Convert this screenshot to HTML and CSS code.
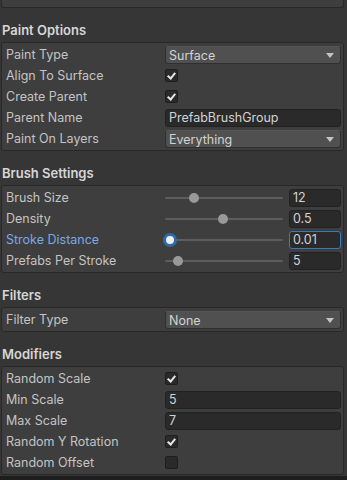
FILE: index.html
```html
<!DOCTYPE html>
<html lang="en">
<head>
    <meta charset="UTF-8">
    <meta name="viewport" content="width=device-width, initial-scale=1.0">
    <title>Prefab Brush</title>
    <link rel="stylesheet" href="styles.css">
</head>
<body>
<div class="inspector">
    <div class="panel panel-cut"></div>

    <h2 class="section-title">Paint Options</h2>
    <div class="panel">
        <div class="row">
            <span class="label">Paint Type</span>
            <div class="dropdown">Surface<span class="arrow"></span></div>
        </div>
        <div class="row">
            <span class="label">Align To Surface</span>
            <div><span class="checkbox checked"></span></div>
        </div>
        <div class="row">
            <span class="label">Create Parent</span>
            <div><span class="checkbox checked"></span></div>
        </div>
        <div class="row">
            <span class="label">Parent Name</span>
            <div class="field">PrefabBrushGroup</div>
        </div>
        <div class="row">
            <span class="label">Paint On Layers</span>
            <div class="dropdown">Everything<span class="arrow"></span></div>
        </div>
    </div>

    <h2 class="section-title">Brush Settings</h2>
    <div class="panel">
        <div class="row">
            <span class="label">Brush Size</span>
            <div class="slider-group">
                <div class="slider"><span class="thumb" style="left: 24.6%"></span></div>
                <div class="field">12</div>
            </div>
        </div>
        <div class="row">
            <span class="label">Density</span>
            <div class="slider-group">
                <div class="slider"><span class="thumb" style="left: 49%"></span></div>
                <div class="field">0.5</div>
            </div>
        </div>
        <div class="row focused">
            <span class="label">Stroke Distance</span>
            <div class="slider-group">
                <div class="slider"><span class="thumb" style="left: 4.2%"></span></div>
                <div class="field">0.01</div>
            </div>
        </div>
        <div class="row">
            <span class="label">Prefabs Per Stroke</span>
            <div class="slider-group">
                <div class="slider"><span class="thumb" style="left: 11%"></span></div>
                <div class="field">5</div>
            </div>
        </div>
    </div>

    <h2 class="section-title">Filters</h2>
    <div class="panel">
        <div class="row">
            <span class="label">Filter Type</span>
            <div class="dropdown">None<span class="arrow"></span></div>
        </div>
    </div>

    <h2 class="section-title">Modifiers</h2>
    <div class="panel">
        <div class="row">
            <span class="label">Random Scale</span>
            <div><span class="checkbox checked"></span></div>
        </div>
        <div class="row">
            <span class="label">Min Scale</span>
            <div class="field">5</div>
        </div>
        <div class="row">
            <span class="label">Max Scale</span>
            <div class="field">7</div>
        </div>
        <div class="row">
            <span class="label">Random Y Rotation</span>
            <div><span class="checkbox checked"></span></div>
        </div>
        <div class="row">
            <span class="label">Random Offset</span>
            <div><span class="checkbox"></span></div>
        </div>
    </div>
</div>
<div class="footer"></div>
</body>
</html>
```

FILE: styles.css
```css
* {
    margin: 0;
    padding: 0;
    box-sizing: border-box;
}
body {
    background-color: #363636;
    font-family: Inter, "Noto Sans", sans-serif;
    font-size: 12.5px;
    color: #c4c4c4;
    width: 347px;
    height: 480px;
    overflow: hidden;
}
.inspector {
    padding: 0 3px 0 1px;
}
.panel {
    background-color: #3e3e3e;
    border: 1px solid #282828;
    border-radius: 3px;
    padding: 1px 2px 1px 2px;
}
.panel-cut {
    height: 8px;
    border-top: none;
    border-radius: 0 0 3px 3px;
}
.section-title {
    font-size: 13px;
    font-weight: 600;
    color: #d6d6d6;
    padding: 11px 0 1px 1px;
    line-height: 22px;
}
.row {
    display: grid;
    grid-template-columns: 161px 1fr;
    align-items: center;
    height: 21px;
}
.label {
    padding-left: 2px;
    white-space: nowrap;
}
.focused .label {
    color: #7ba8e6;
}
.dropdown {
    position: relative;
    height: 18px;
    line-height: 17px;
    background-color: #505050;
    border: 1px solid #2f2f2f;
    border-top-color: #555;
    border-radius: 3px;
    padding-left: 3px;
    color: #d2d2d2;
}
.arrow {
    position: absolute;
    right: 6px;
    top: 6px;
    width: 0;
    height: 0;
    border-left: 4px solid transparent;
    border-right: 4px solid transparent;
    border-top: 5px solid #c4c4c4;
}
.field {
    height: 18px;
    line-height: 16px;
    background-color: #2a2a2a;
    border: 1px solid #212121;
    border-radius: 3px;
    padding-left: 3px;
    color: #d2d2d2;
}
.focused .field {
    border-color: #3a79bb;
}
.checkbox {
    display: block;
    position: relative;
    width: 13px;
    height: 13px;
    background-color: #2a2a2a;
    border: 1px solid #1e1e1e;
    border-radius: 2px;
}
.checkbox.checked::after {
    content: "";
    position: absolute;
    left: 3px;
    top: 1px;
    width: 3px;
    height: 6px;
    border-right: 2px solid #e8e8e8;
    border-bottom: 2px solid #e8e8e8;
    transform: rotate(40deg);
}
.slider-group {
    display: grid;
    grid-template-columns: 1fr 52px;
    gap: 5px;
    align-items: center;
}
.slider {
    position: relative;
    height: 18px;
    margin: 0 1px 0 0;
}
.slider::before {
    content: "";
    position: absolute;
    left: 0;
    right: 0;
    top: 8px;
    height: 2px;
    background-color: #5d5d5d;
    border-radius: 1px;
}
.thumb {
    position: absolute;
    top: 4px;
    width: 10px;
    height: 10px;
    margin-left: -5px;
    border-radius: 50%;
    background-color: #999999;
}
.focused .thumb {
    top: 2px;
    width: 14px;
    height: 14px;
    margin-left: -7px;
    background-color: #eeeeee;
    border: 3px solid #2f6aa6;
}
.footer {
    margin-top: 1px;
    height: 10px;
    background-color: #1e1e1e;
}
```
